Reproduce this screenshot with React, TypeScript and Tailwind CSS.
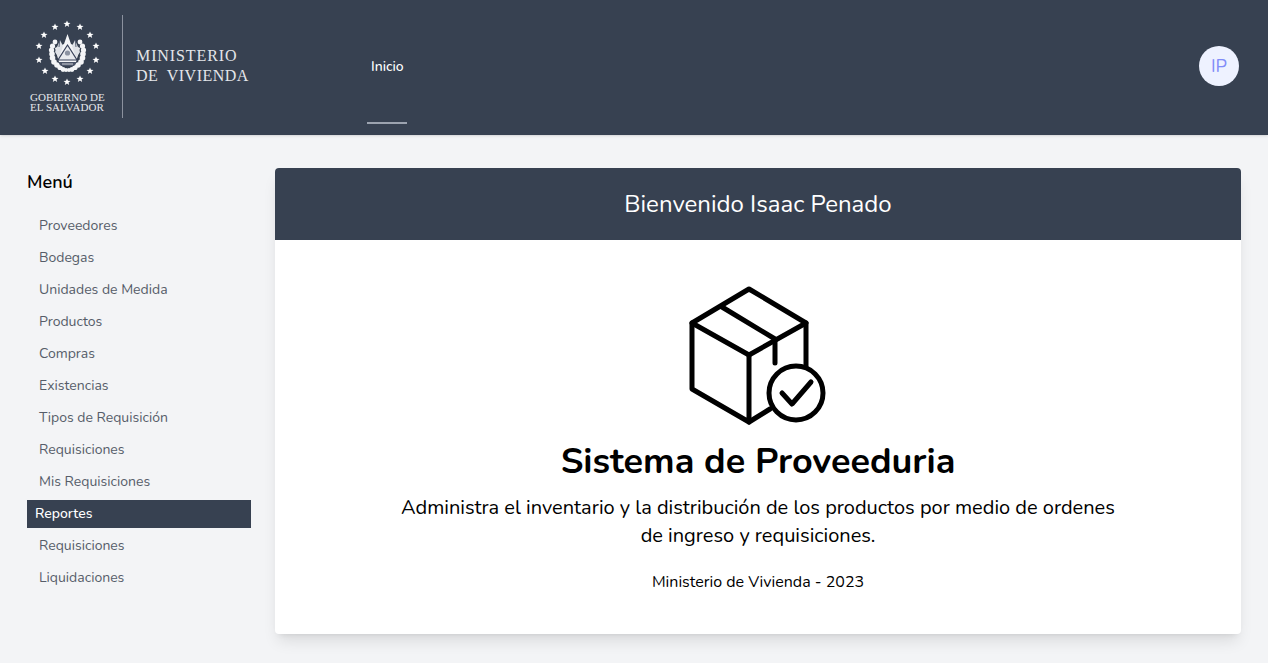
const menuItems = [
  "Proveedores",
  "Bodegas",
  "Unidades de Medida",
  "Productos",
  "Compras",
  "Existencias",
  "Tipos de Requisición",
  "Requisiciones",
  "Mis Requisiciones",
];

const stars = [
  [55, 27], [67, 24], [80, 27], [44, 35], [90, 35], [39, 46], [96, 46],
  [39, 60], [96, 60], [45, 71], [90, 71], [55, 79], [67, 82], [80, 79],
];

// leaves of the wreath, left side; the right side is mirrored
const leaves = [
  [55, 42, 2.4], [52.5, 46, 2.6], [51.5, 50, 2.6], [52, 54, 2.8], [52.5, 58, 2.8],
  [54, 62, 2.8], [57, 65, 2.8], [60, 67.5, 2.6], [63, 69.5, 2.4], [66, 70, 2],
];

function Star({ x, y }: { x: number; y: number }) {
  return (
    <polygon
      transform={`translate(${x} ${y})`}
      points="0,-3.6 1,-1.2 3.5,-1.1 1.5,0.5 2.2,3 0,1.6 -2.2,3 -1.5,0.5 -3.5,-1.1 -1,-1.2"
      fill="#fff"
    />
  );
}

function Emblem() {
  return (
    <svg width="122" height="90" viewBox="0 0 122 90" className="block">
      {stars.map(([x, y]) => (
        <Star key={`${x}-${y}`} x={x} y={y} />
      ))}
      {leaves.map(([x, y, r]) => (
        <g key={`${x}-${y}`} fill="#f4f5f7">
          <circle cx={x} cy={y} r={r} />
          <circle cx={135 - x} cy={y} r={r} />
        </g>
      ))}
      {/* flags and spire */}
      <path d="M67.5 34 L71 44 L80 48 L76 62 H59 L55 48 L64 44 Z" fill="#f4f5f7" />
      <path d="M60 40 L55 52 L59 58 L63 46 Z M75 40 L80 52 L76 58 L72 46 Z" fill="#dfe2e7" />
      <path d="M60 38 L59 47 M75 38 L76 47" stroke="#39425a" strokeWidth="0.8" />
      {/* triangle */}
      <path d="M67.5 45 L77 60 H58 Z" fill="#e8eaee" stroke="#39425a" strokeWidth="1.2" />
      <circle cx="67.5" cy="53" r="2.6" fill="#8b92a1" />
      <path d="M58 62 H77 L74 66 H61 Z" fill="#4b5468" />
      <path d="M62 64 H73" stroke="#f4f5f7" strokeWidth="0.8" />
    </svg>
  );
}

function BoxIcon() {
  return (
    <svg width="170" height="155" viewBox="0 0 170 155" fill="none" stroke="#000" strokeWidth="5" strokeLinejoin="round" strokeLinecap="round" className="mr-[6px] block">
      <path d="M79 13 L136 47 L79 79 L22 47 Z" />
      <path d="M22 47 V113 L79 146 V79" />
      <path d="M136 47 V90" />
      <path d="M79 146 L100 133" />
      <path d="M52 31 L105 63 V87" />
      <circle cx="126" cy="117" r="27" fill="#fff" />
      <path d="M112 117 L122 128 L141 106" />
    </svg>
  );
}

export default function App() {
  return (
    <div className="min-h-screen bg-[#f3f4f6] font-['Nunito','Noto_Sans',sans-serif] text-black">
      {/* Navbar */}
      <header className="flex h-[135px] items-center bg-[#374151] shadow-sm">
        <div className="flex h-full w-[367px] shrink-0 items-start">
          <div className="w-[122px] shrink-0">
            <Emblem />
            <div className="ml-[30px] w-[80px] whitespace-nowrap font-['Liberation_Serif',serif] text-[11px] leading-[10px] tracking-[0.05px] text-[#e4e6ea]">
              <div className="mt-[2px]">GOBIERNO DE</div>
              <div>EL SALVADOR</div>
            </div>
          </div>
          <div className="mt-[15px] h-[103px] w-px bg-[#8b919e]" />
          <div className="ml-[13px] mt-[46px] font-['Liberation_Serif',serif] text-[16px] leading-[20px] tracking-[0.9px] text-[#e4e6ea]">
            <div>MINISTERIO</div>
            <div className="whitespace-pre tracking-[0.45px]">DE  VIVIENDA</div>
          </div>
        </div>
        <nav className="flex h-full w-10 flex-col items-center">
          <a className="mt-[58px] w-full pl-1 text-sm font-medium leading-[18px] text-white">Inicio</a>
          <div className="mt-auto mb-[11px] h-0.5 w-full bg-[#9ca3af]" />
        </nav>
        <div className="ml-auto mr-[29px] mb-1 flex h-10 w-10 items-center justify-center rounded-full bg-[#eef2ff] text-lg text-[#818cf8]">
          IP
        </div>
      </header>

      <main className="flex items-start">
        {/* Sidebar */}
        <aside className="ml-[27px] mr-6 mt-[35px] w-[224px] shrink-0">
          <h2 className="text-lg font-semibold leading-6">Menú</h2>
          <ul className="mt-4 text-sm text-[#565d69]">
            {menuItems.map((item) => (
              <li key={item} className="flex h-8 items-center pl-3">{item}</li>
            ))}
            <li className="my-0.5 flex h-7 items-center bg-[#374151] pl-2 font-medium text-white">Reportes</li>
            <li className="flex h-8 items-center pl-3">Requisiciones</li>
            <li className="flex h-8 items-center pl-3">Liquidaciones</li>
          </ul>
        </aside>

        {/* Content */}
        <section className="mr-[27px] mt-[33px] mb-[29px] flex-1 overflow-hidden rounded bg-white shadow-lg">
          <div className="flex h-[72px] items-center justify-center bg-[#374151] text-2xl text-white">
            Bienvenido Isaac Penado
          </div>
          <div className="flex flex-col items-center pt-9 pb-10 text-center">
            <BoxIcon />
            <h1 className="mt-[11px] text-4xl font-bold leading-10">Sistema de Proveeduria</h1>
            <p className="mt-3 w-[740px] text-xl leading-7">
              Administra el inventario y la distribución de los productos por medio de ordenes de ingreso y requisiciones.
            </p>
            <p className="mt-5 text-base leading-6">Ministerio de Vivienda - 2023</p>
          </div>
        </section>
      </main>
    </div>
  );
}
